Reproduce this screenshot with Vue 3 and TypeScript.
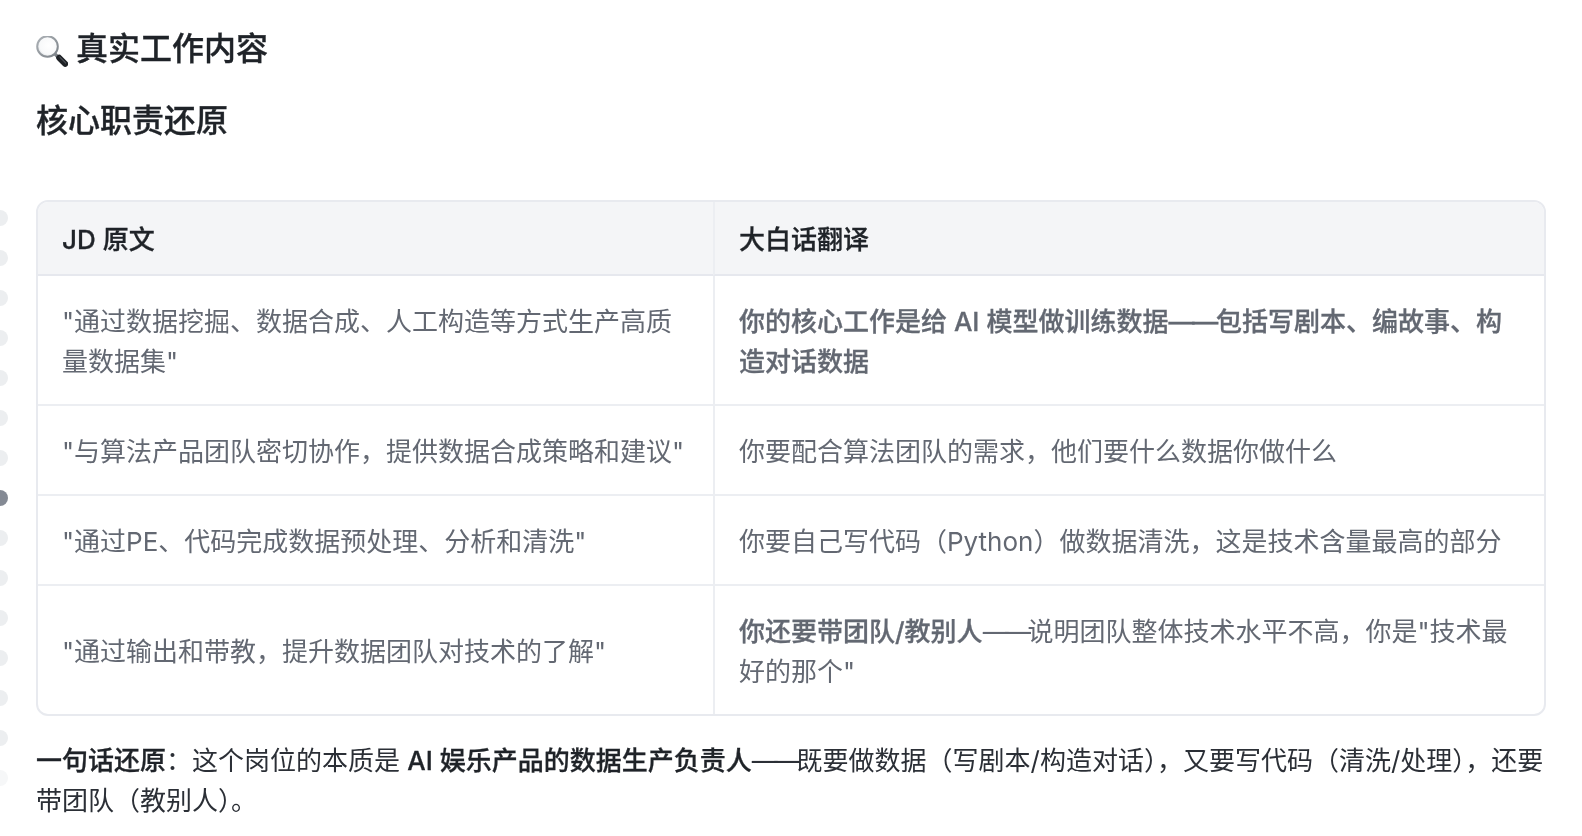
<script setup lang="ts">
const dots = Array.from({ length: 15 }, (_, i) => i)
</script>

<template>
  <main class="page">
    <div class="dots" aria-hidden="true">
      <span v-for="d in dots" :key="d" class="dot" :class="{ active: d === 7, fade: d === 14 }"></span>
    </div>
    <h2 class="title"><span class="emoji">
      <svg viewBox="0 0 32 32" width="32" height="32">
        <defs>
          <radialGradient id="lens" cx="55%" cy="45%" r="60%">
            <stop offset="0" stop-color="#ffffff" />
            <stop offset="0.7" stop-color="#f8f9fa" />
            <stop offset="1" stop-color="#d8dbde" />
          </radialGradient>
          <linearGradient id="rim" x1="0" y1="0" x2="1" y2="1">
            <stop offset="0" stop-color="#aeb3b8" />
            <stop offset="1" stop-color="#7b8187" />
          </linearGradient>
        </defs>
        <path d="M18.6 17.6 L22 21" stroke="#7d8288" stroke-width="3.4" />
        <path d="M23.2 21.8 L29.2 27.8" stroke="#1f2226" stroke-width="6" stroke-linecap="round" />
        <path d="M23.8 21.2 L29.6 27" stroke="#666c73" stroke-width="1" stroke-linecap="round" />
        <circle cx="11.5" cy="10.5" r="10.3" fill="url(#lens)" stroke="url(#rim)" stroke-width="2" />
      </svg>
    </span> 真实工作内容</h2>
    <h3 class="subtitle">核心职责还原</h3>
    <div class="table-wrap">
      <table>
        <colgroup><col class="c1" /><col /></colgroup>
        <thead>
          <tr><th>JD 原文</th><th>大白话翻译</th></tr>
        </thead>
        <tbody>
          <tr>
            <td>"通过数据挖掘、数据合成、人工构造等方式生产高质量数据集"</td>
            <td><strong>你的核心工作是给 AI 模型做训练数据<span class="dash wide">——</span>包括写剧本、编故事、构造对话数据</strong></td>
          </tr>
          <tr>
            <td>"与算法产品团队密切协作，提供数据合成策略和建议"</td>
            <td>你要配合算法团队的需求，他们要什么数据你做什么</td>
          </tr>
          <tr>
            <td>"通过PE、代码完成数据预处理、分析和清洗"</td>
            <td>你要自己写代码（Python）做数据清洗，这是技术含量最高的部分</td>
          </tr>
          <tr>
            <td>"通过输出和带教，提升数据团队对技术的了解"</td>
            <td><strong>你还要带团队/教别人</strong><span class="dash">——</span>说明团队整体技术水平不高，你是"技术最好的那个"</td>
          </tr>
        </tbody>
      </table>
    </div>
    <p class="summary"><strong>一句话还原</strong>：这个岗位的本质是 <strong>AI 娱乐产品的数据生产负责人</strong><span class="dash">——</span>既要做数据（写剧本/构造对话），又要写代码（清洗/处理），还要带团队（教别人）。</p>
  </main>
</template>

<style>
html, body { margin: 0; background: #fff; overflow: hidden; }
</style>

<style scoped>
.page {
  position: relative;
  box-sizing: border-box;
  height: 836px;
  padding: 25px 36px 0;
  font-family: Inter, "Noto Sans CJK SC", sans-serif;
  color: #1f2328;
  overflow: hidden;
  filter: blur(0.3px);
}
.dots {
  position: absolute;
  left: -8px;
  top: 210px;
  display: flex;
  flex-direction: column;
  gap: 24px;
}
.dot { width: 16px; height: 16px; border-radius: 50%; background: #eceef0; }
.dot.active { background: #848a94; }
.dot.fade { background: #f6f7f8; }
.title, .subtitle {
  margin: 0;
  font-size: 32px;
  line-height: 48px;
  font-weight: 500;
  -webkit-text-stroke: 0.35px currentColor;
}
.title { display: flex; align-items: center; gap: 8px; }
.emoji { display: block; width: 32px; height: 32px; }
.subtitle { margin-top: 24px; }
.table-wrap {
  margin-top: 55px;
  width: 1510px;
  box-sizing: border-box;
  border: 2px solid #e8eaef;
  border-radius: 12px;
  overflow: hidden;
}
table {
  width: 100%;
  table-layout: fixed;
  border-collapse: separate;
  border-spacing: 0;
  font-size: 26px;
  line-height: 40px;
}
.c1 { width: 675px; }
th, td {
  padding: 26px 24px 22px;
  text-align: left;
  vertical-align: middle;
}
th {
  background: #f4f5f7;
  color: #1f2328;
  font-weight: 500;
  padding: 18px 24px 14px;
  border-bottom: 2px solid #e6e8ee;
  -webkit-text-stroke: 0.3px currentColor;
}
th + th, td + td { border-left: 2px solid #eceef2; }
td { color: #636872; border-top: 2px solid #eceef2; }
tbody tr:first-child td { border-top: 0; }
td strong { font-weight: 500; -webkit-text-stroke: 0.3px currentColor; }
.dash { letter-spacing: -3.6px; }
.dash.wide { letter-spacing: -2.2px; }
.summary {
  margin: 25px 0 0;
  font-size: 26px;
  line-height: 40px;
  color: #2b2f36;
}
.summary strong { font-weight: 500; color: #1f2328; -webkit-text-stroke: 0.3px currentColor; }
</style>
